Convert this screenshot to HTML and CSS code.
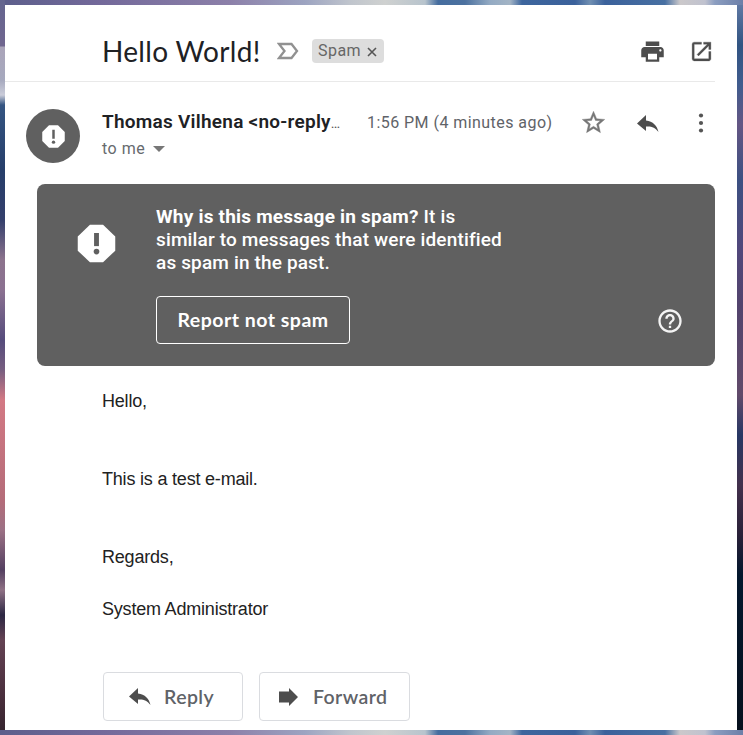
FILE: index.html
```html
<!DOCTYPE html>
<html lang="en">
<head>
<meta charset="utf-8">
<title>Hello World!</title>
<link rel="stylesheet" href="styles.css">
</head>
<body>
<div class="edge-left"></div>
<main class="mail">
  <header class="subject">
    <h1>Hello World!</h1>
    <svg class="marker" viewBox="0 0 22 18"><path d="M2 2H14.5L20 9L14.5 16H2L7.500 9Z" fill="none" stroke="#919191" stroke-width="2.300"/></svg>
    <span class="label"><span class="label-name">Spam</span><svg viewBox="0 0 10 10"><path d="M1 1L9 9M9 1L1 9" stroke="#555" stroke-width="1.600"/></svg></span>
    <svg class="print" viewBox="0 0 24 24"><path fill="#4d4d4d" d="M19 8H5c-1.660 0-3 1.340-3 3v6h4v4h12v-4h4v-6c0-1.660-1.340-3-3-3zm-3 11H8v-5h8v5zm3-7c-.55 0-1-.45-1-1s.45-1 1-1 1 .45 1 1-.45 1-1 1zM18 3H6v4h12V3z"/></svg>
    <svg class="open" viewBox="0 0 24 24"><path fill="#4d4d4d" stroke="#4d4d4d" stroke-width=".3" d="M19 19H5V5h7V3H5a2 2 0 0 0-2 2v14a2 2 0 0 0 2 2h14c1.100 0 2-.9 2-2v-7h-2v7zM14 3v2h3.590l-9.830 9.830 1.410 1.410L19 6.410V10h2V3h-7z"/></svg>
  </header>
  <section class="sender">
    <div class="avatar"><svg viewBox="0 0 24 24"><path fill="#fff" d="M16 2H8L2 8v8l6 6h8l6-6V8z"/><path fill="#606060" d="M10.900 6h2.200v8h-2.200z"/><circle cx="12" cy="17" r="1.500" fill="#606060"/></svg></div>
    <div class="who">
      <div class="name"><b>Thomas Vilhena &lt;no-reply</b><span>…</span></div>
      <div class="to"><span>to me</span><i class="caret"></i></div>
    </div>
    <time>1:56 PM (4 minutes ago)</time>
    <svg class="star" viewBox="0 0 24 24"><path fill="#777" stroke="#777" stroke-width=".35" d="M22 9.240l-7.190-.62L12 2 9.190 8.630 2 9.240l5.460 4.730L5.820 21 12 17.270 18.180 21l-1.630-7.030L22 9.240zM12 15.400l-3.760 2.270 1-4.280-3.320-2.880 4.380-.38L12 6.100l1.710 4.040 4.380.38-3.320 2.880 1 4.280L12 15.400z"/></svg>
    <svg class="reply-top" viewBox="0 0 22 18"><path fill="#4d4d4d" d="M9 0L0 8.500L9 16V11.500C14.500 11 18 12.500 21.500 17C20 10.500 16 6.500 9 5.500Z"/></svg>
    <svg class="more" viewBox="0 0 6 20"><g fill="#555"><circle cx="3" cy="2.500" r="2.100"/><circle cx="3" cy="10" r="2.100"/><circle cx="3" cy="17.500" r="2.100"/></g></svg>
  </section>
  <section class="notice">
    <svg class="notice-icon" viewBox="0 0 24 24"><path fill="#fff" d="M15.500 2H8.500L2 8.200v7.600L8.500 22h7l6.500-6.200V8.200z"/><path fill="#606060" d="M10.700 6.400h2.600v7h-2.600z"/><circle cx="12" cy="16.300" r="1.500" fill="#606060"/></svg>
    <div class="notice-body">
      <p><b>Why is this message in spam?</b> It is<br>similar to messages that were identified<br>as spam in the past.</p>
      <button class="not-spam">Report not spam</button>
    </div>
    <svg class="help" viewBox="0 0 24 24"><path fill="#f4f4f4" d="M11 18h2v-2h-2v2zm1-16C6.480 2 2 6.480 2 12s4.480 10 10 10 10-4.480 10-10S17.520 2 12 2zm0 18c-4.410 0-8-3.590-8-8s3.590-8 8-8 8 3.590 8 8-3.590 8-8 8zm0-14c-2.210 0-4 1.790-4 4h2c0-1.100.9-2 2-2s2 .9 2 2c0 2-3 1.750-3 5h2c0-2.250 3-2.500 3-5 0-2.210-1.790-4-4-4z"/></svg>
  </section>
  <article>
    <p>Hello,</p>
    <p class="gap">This is a test e-mail.</p>
    <p class="gap">Regards,</p>
    <p>System Administrator</p>
  </article>
  <footer>
    <button class="reply"><svg viewBox="0 0 22 18"><path fill="#4d4d4d" d="M9 0L0 8.500L9 16V11.500C14.500 11 18 12.500 21.500 17C20 10.500 16 6.500 9 5.500Z"/></svg><span>Reply</span></button>
    <button class="forward"><svg viewBox="0 0 20 18"><path fill="#4d4d4d" d="M0 3.500H10V0L19 9L10 18V14.500H0Z"/></svg><span>Forward</span></button>
  </footer>
</main>
<div class="edge-right"></div>
</body>
</html>
```
FILE: styles.css
```css
* { box-sizing: border-box; }
body {
  margin: 0; width: 743px; height: 735px; overflow: hidden;
  display: grid; grid-template: 5px 725px 5px / 5px 732px 6px;
  background: linear-gradient(90deg, #5c5e8b, #73699a 100px, #8c80a9 230px, #9da4c1 305px, #c0c5cd 350px, #cfd1d0 385px, #b8c4cd 425px, #456d9f 438px, #4c719f 465px, #93aac3 490px, #a3b4c5 510px, #3d659d 522px, #3b619b 575px, #708fb2 590px, #3b619b 605px, #4870a2 665px, #cbc8ca 680px, #c0c2cf 705px, #8b9dc0 715px, #6c7fa8 743px);
  font-family: Roboto, sans-serif;
}
svg { display: block; flex: none; }
p, h1 { margin: 0; }
.edge-left {
  grid-area: 1 / 1 / 3 / 2;
  background: linear-gradient(#64658f 0, #70668f 46px, #aaa4b9 47px, #a6a9be 80px, #cbcdda 95px, #355582 105px, #263e6a 170px, #343f6c 220px, #8c738d 260px, #8b7191 290px, #564c7c 340px, #775e80 370px, #d37984 400px, #b46c79 500px, #9c7185 530px, #544061 570px, #8f7185 590px, #2c2743 615px, #634253 640px, #482d3b 700px, #36252f 730px);
}
.mail { grid-area: 2 / 2; background: #fff; }
.edge-right {
  grid-area: 2 / 3;
  background: linear-gradient(#6079a4, #315482 40px, #405c8e 80px, #645684 120px, #3c5082 175px, #51477b 245px, #52436d 300px, #614a6a 390px, #273764 430px, #42304c 480px, #292038 530px, #02172d 570px, #06101d 725px);
}
.subject {
  height: 77px; width: 710px; padding: 16px 0 0 97px;
  display: flex; align-items: center;
  border-bottom: 1px solid #e9e9e9;
}
h1 { width: 175px; font: 400 28px/36px Lato, sans-serif; letter-spacing: .3px; color: #202124; white-space: nowrap; }
.marker { width: 22px; height: 18px; }
.label {
  margin-left: 13px; width: 72px; height: 24px; padding: 0 6px 2px; border-radius: 4px;
  background: #ddd; color: #666; display: flex; align-items: center; gap: 6px;
  font-size: 16px; letter-spacing: .45px;
}
.label svg { width: 10px; height: 10px; margin-top: 3px; }
.print { margin-left: 255px; width: 27px; height: 27px; }
.open { margin-left: 23px; width: 25px; height: 25px; }
.sender { height: 102px; display: flex; align-items: flex-start; padding: 27px 0 0 21px; }
.avatar { width: 54px; height: 54px; border-radius: 50%; background: #606060; display: grid; place-items: center; }
.avatar svg { width: 27px; height: 27px; }
.who { width: 265px; margin-left: 22px; }
.name { color: #202124; font-size: 19px; line-height: 26px; white-space: nowrap; letter-spacing: .25px; }
.name b { font-weight: 600; }
.name span { color: #555; font-size: 14px; letter-spacing: 0; }
.to { display: flex; align-items: center; gap: 8px; margin-top: 1px; color: #666a6e; font-size: 16px; line-height: 24px; letter-spacing: .5px; }
.caret { border: 6px solid transparent; border-top: 6px solid #777; border-bottom: 0; }
time { width: 216px; color: #5f6368; font-size: 16px; line-height: 28px; letter-spacing: .45px; white-space: nowrap; }
.star { width: 27px; height: 27px; margin-left: -3px; }
.reply-top { width: 22px; height: 18px; margin: 6px 0 0 30px; }
.more { width: 6px; height: 20px; margin: 4px 0 0 39px; }
.notice {
  width: 678px; height: 182px; margin-left: 32px; padding: 21px 31px 0 37px;
  border-radius: 8px; background: #606060; color: #fff; display: flex; align-items: flex-start;
}
.notice-icon { width: 45px; height: 45px; margin-top: 16px; }
.notice-body { margin-left: 37px; width: 492px; }
.notice p { font-size: 19px; font-weight: 500; line-height: 23px; letter-spacing: .15px; white-space: nowrap; }
.notice b { font-weight: 700; letter-spacing: .21px; }
.not-spam {
  margin-top: 22px; width: 194px; height: 48px; padding: 0 0 1px; border: 1px solid #fff; border-radius: 4px;
  background: none; color: #fff; font: 700 19.500px Lato, sans-serif; letter-spacing: .5px; white-space: nowrap;
}
.help { width: 28px; height: 28px; margin: 102px 0 0 9px; }
article { padding: 22px 0 0 97px; color: #222; font: 18px/26px "Liberation Sans", Arial, sans-serif; letter-spacing: -.2px; }
article p { height: 26px; margin-bottom: 26px; }
article .gap { margin-top: 52px; }
footer { display: flex; gap: 16px; margin: 50px 0 0 98px; }
article p:last-child { margin-bottom: 0; }
footer button {
  display: flex; align-items: center; height: 49px; padding: 0 0 0 25px;
  border: 1px solid #dadce0; border-radius: 4px; background: #fff;
  color: #5f6368; font: 600 19.500px Lato, sans-serif; letter-spacing: .4px; white-space: nowrap;
}
.reply { width: 140px; }
.forward { width: 151px; }
.reply svg { width: 22px; height: 18px; margin-right: 13px; }
footer .forward { padding-left: 19px; }
.forward svg { width: 20px; height: 18px; margin-right: 14px; }
```
